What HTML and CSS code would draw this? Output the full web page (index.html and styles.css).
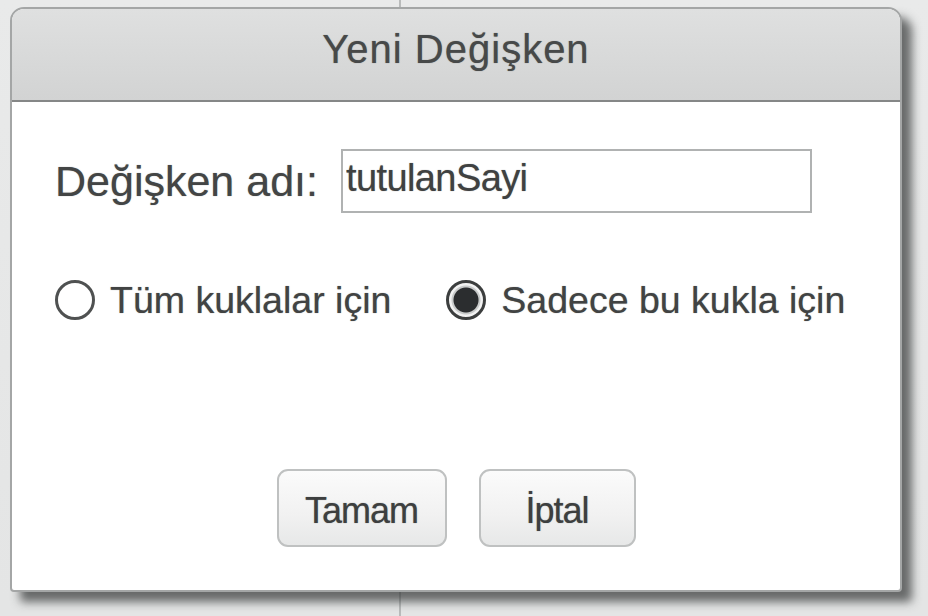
FILE: index.html
```html
<!DOCTYPE html>
<html lang="tr">
<head>
<meta charset="utf-8">
<link rel="stylesheet" href="styles.css">
</head>
<body>
<div class="dialog">
  <div class="dialog-header">Yeni Değişken</div>
  <div class="dialog-body">
    <div class="name-row">
      <label class="name-label" for="varname">Değişken adı:</label>
      <input class="name-input" id="varname" type="text" value="tutulanSayi" readonly>
    </div>
    <div class="scope-row">
      <div class="option">
        <span class="radio"></span>
        <span class="option-text">Tüm kuklalar için</span>
      </div>
      <div class="option">
        <span class="radio radio-on"></span>
        <span class="option-text">Sadece bu kukla için</span>
      </div>
    </div>
    <div class="buttons">
      <button class="btn btn-ok">Tamam</button>
      <button class="btn btn-cancel">İptal</button>
    </div>
  </div>
</div>
</body>
</html>
```

FILE: styles.css
```css
html, body {
  margin: 0;
  padding: 0;
}
body {
  width: 928px;
  height: 616px;
  overflow: hidden;
  font-family: "Liberation Sans", Arial, sans-serif;
  background:
    linear-gradient(to right, transparent 399px, #b9bbbb 399px, #b9bbbb 401px, transparent 401px),
    linear-gradient(to bottom, #e9eaea 0px, #e4e5e5 600px);
}
.dialog {
  margin: 7px 0 0 10px;
  width: 892px;
  height: 585px;
  box-sizing: border-box;
  border: 2px solid #a4a6a6;
  border-radius: 14px 14px 4px 4px;
  background: #ffffff;
  box-shadow: 10px 10px 10px rgba(50, 52, 52, 0.7);
  display: flex;
  flex-direction: column;
  overflow: hidden;
  text-shadow: 0 0 1px rgba(50, 52, 52, 0.55);
}
.dialog-header {
  height: 93px;
  flex: none;
  box-sizing: border-box;
  padding-top: 17px;
  text-align: center;
  font-size: 40px;
  line-height: 46px;
  letter-spacing: 1px;
  color: #474949;
  background: linear-gradient(to bottom, #dfe0e0 0%, #d2d3d3 100%);
  border-bottom: 2px solid #858787;
}
.dialog-body {
  flex: 1;
  display: flex;
  flex-direction: column;
  padding: 0 0 0 43px;
}
.name-row {
  display: flex;
  align-items: center;
  margin-top: 47px;
  height: 64px;
}
.name-label {
  font-size: 43px;
  color: #434545;
  width: 286px;
  flex: none;
}
.name-input {
  width: 471px;
  height: 64px;
  box-sizing: border-box;
  border: 2px solid #b0b2b2;
  padding: 0 0 6px 3px;
  margin: 0;
  font-family: "Liberation Sans", Arial, sans-serif;
  font-size: 38px;
  letter-spacing: -0.6px;
  color: #3f4141;
  background: #fff;
  outline: none;
  text-shadow: 0 0 1px rgba(50, 52, 52, 0.55);
}
.scope-row {
  display: flex;
  align-items: center;
  margin-top: 65px;
  height: 44px;
}
.option {
  display: flex;
  align-items: center;
}
.option + .option {
  margin-left: 55px;
}
.radio {
  width: 40px;
  height: 40px;
  box-sizing: border-box;
  border: 3px solid #4f5151;
  border-radius: 50%;
  background: #fff;
  flex: none;
  margin-right: 15px;
}
.radio-on {
  border: 3px solid #3c3e3e;
  background: radial-gradient(circle, #2b2d2f 0 12px, #c9cbcb 13px 14px, #f2f2f2 15px);
}
.option-text {
  font-size: 37.5px;
  color: #414343;
}
.buttons {
  display: flex;
  justify-content: center;
  gap: 32px;
  margin-top: 147px;
  margin-left: -43px;
}
.btn {
  height: 78px;
  box-sizing: border-box;
  border: 2px solid #bfc1c1;
  border-radius: 11px;
  background: linear-gradient(to bottom, #fbfbfb 0%, #f1f1f1 60%, #e7e8e8 100%);
  font-family: "Liberation Sans", Arial, sans-serif;
  font-size: 36px;
  letter-spacing: -1px;
  color: #3d3f3f;
  padding: 6px 0 0 0;
  margin: 0;
  text-shadow: 0 0 1px rgba(50, 52, 52, 0.6);
}
.btn-ok {
  width: 170px;
}
.btn-cancel {
  width: 157px;
}
```
